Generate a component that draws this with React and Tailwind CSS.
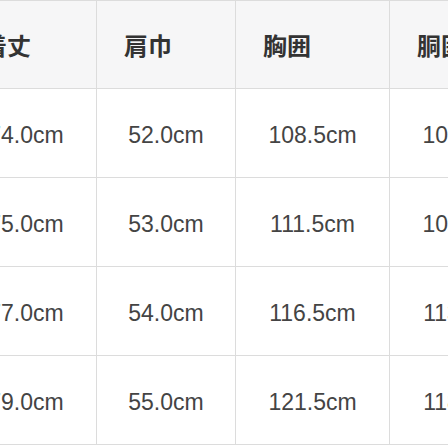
import React from 'react';

const headers = ['着丈', '肩巾', '胸囲', '胴囲'];
const rows = [
  ['74.0cm', '52.0cm', '108.5cm', '105.0cm'],
  ['75.0cm', '53.0cm', '111.5cm', '108.0cm'],
  ['77.0cm', '54.0cm', '116.5cm', '113.0cm'],
  ['79.0cm', '55.0cm', '121.5cm', '118.0cm'],
];
const widths = ['w-[141px]', 'w-[139px]', 'w-[154px]', 'w-[154px]'];

const App = () => {
  return (
    <div className="w-[448px] h-[448px] overflow-hidden bg-white">
      <div className="ml-[-44px] w-[588px]" style={{ fontFamily: '"Liberation Sans", Arial, "Noto Sans CJK JP", sans-serif' }}>
        <div className="flex h-[89px] bg-[#f6f6f7] border-t border-b border-[#dcdcdc]">
          {headers.map((h, i) => (
            <div
              key={h}
              className={`${widths[i]} shrink-0 flex items-center pl-[27px] border-r border-[#dcdcdc] text-[24px] font-bold text-[#333]`}
              style={{ fontFamily: '"Noto Sans CJK JP", sans-serif' }}
            >
              {h}
            </div>
          ))}
        </div>
        {rows.map((r, ri) => (
          <div key={ri} className="flex h-[89px] border-b border-[#dcdcdc]">
            {r.map((v, i) => (
              <div
                key={i}
                className={`${widths[i]} shrink-0 flex items-center justify-center pt-[4px] border-r border-[#dcdcdc] text-[23px] text-[#444]`}
              >
                {v}
              </div>
            ))}
          </div>
        ))}
      </div>
    </div>
  );
};

export default App;
